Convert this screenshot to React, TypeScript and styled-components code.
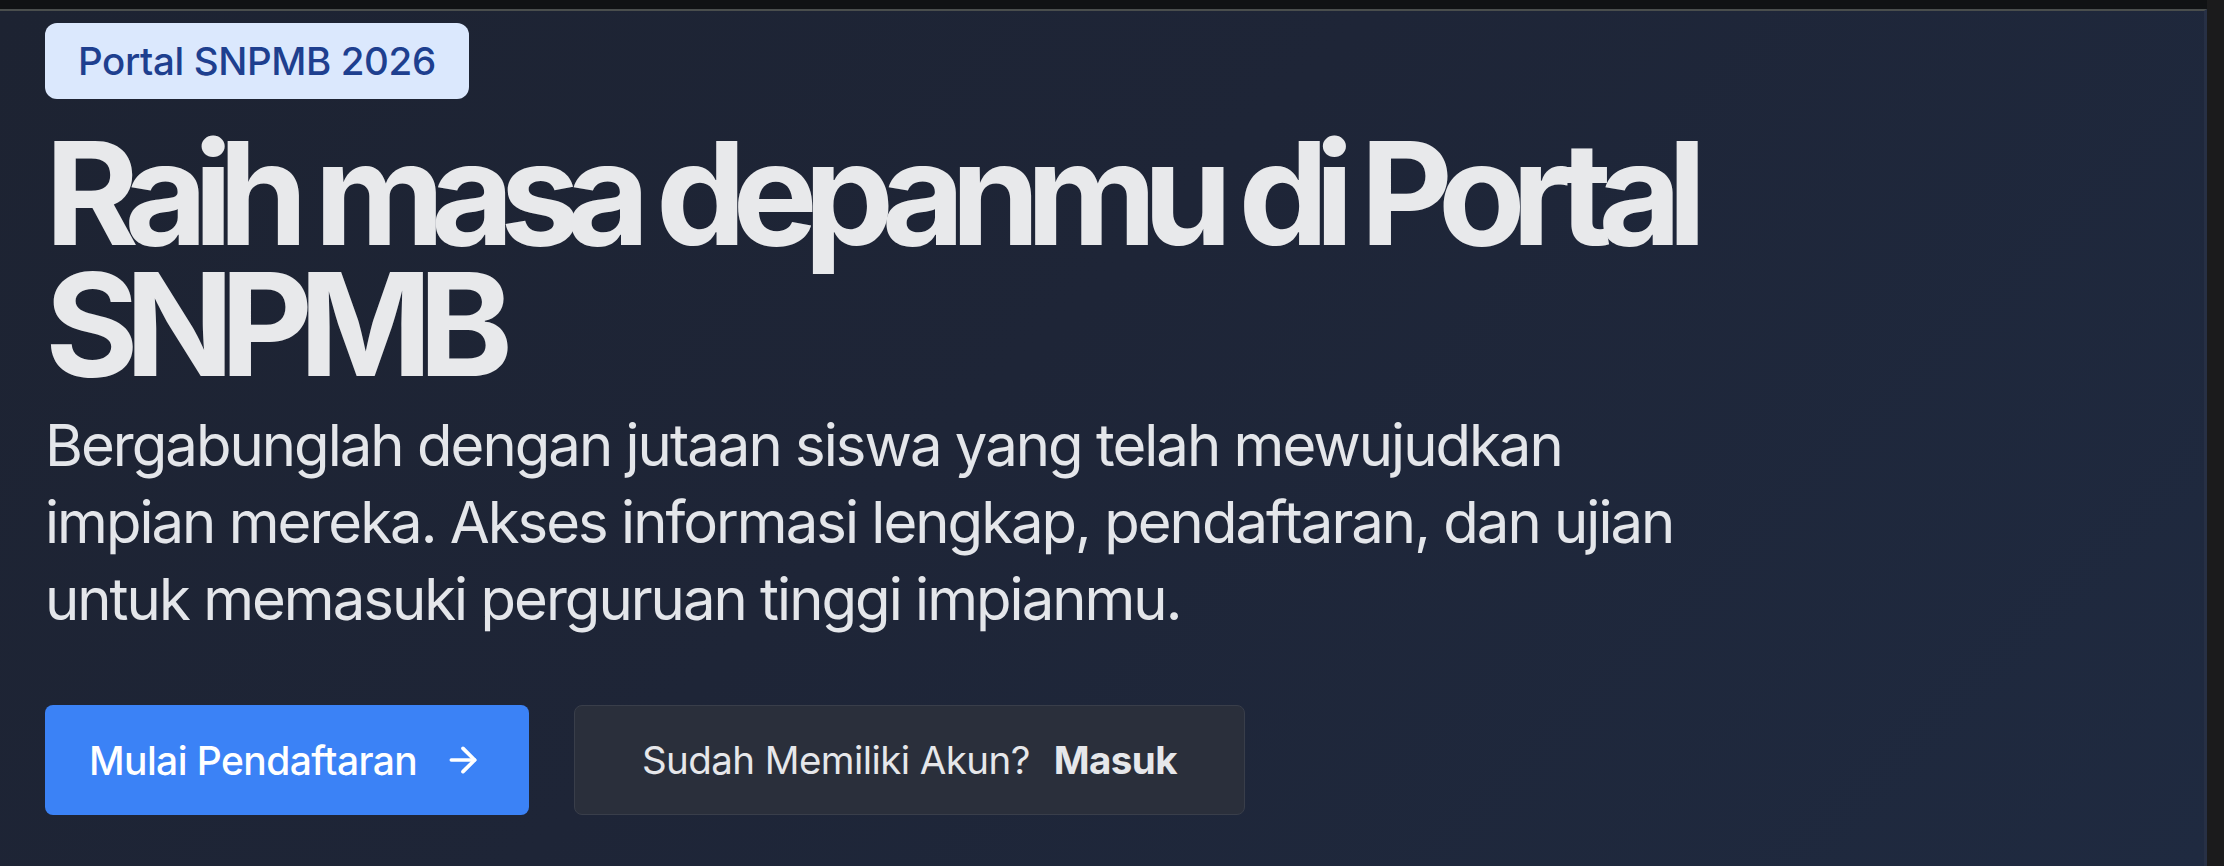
import React from "react";
import styled, { createGlobalStyle } from "styled-components";
import { ArrowRight } from "lucide-react";

const GlobalStyle = createGlobalStyle`
  html, body {
    margin: 0;
    padding: 0;
    background: #111315;
  }
  * {
    box-sizing: border-box;
  }
`;

const Page = styled.div`
  display: flex;
  width: 100%;
  height: 866px;
  overflow: hidden;
  font-family: Inter, "Noto Sans", sans-serif;
`;

const Main = styled.div`
  flex: 1;
  display: flex;
  flex-direction: column;
`;

const TopStrip = styled.div`
  height: 9px;
  background: #101214;
`;

const Hero = styled.section`
  flex: 1;
  border-top: 2px solid #4a4e4d;
  border-right: 3px solid #273045;
  background: linear-gradient(135deg, #1d2332 0%, #1e2537 45%, #1f2a40 100%);
  padding: 12px 0 0 45px;
  display: flex;
  flex-direction: column;
  align-items: flex-start;
`;

const ScrollTrack = styled.div`
  width: 17px;
  background: #1b1b1c;
`;

const Badge = styled.div`
  display: inline-flex;
  align-items: center;
  height: 76px;
  padding: 0 33px;
  border-radius: 12px;
  background: #dbe8fd;
  color: #1e3f8f;
  font-size: 38.5px;
  font-weight: 500;
  letter-spacing: -0.01em;
`;

const Heading = styled.h1`
  margin: 28px 0 0 0;
  font-size: 143px;
  font-weight: 700;
  line-height: 131px;
  letter-spacing: -0.096em;
  color: #e8e9eb;
`;

const Lead = styled.p`
  margin: 18px 0 0 0;
  font-size: 58px;
  font-weight: 400;
  line-height: 77px;
  letter-spacing: -0.034em;
  color: #e4e6ea;
`;

const Actions = styled.div`
  display: flex;
  gap: 45px;
  margin-top: 67px;
`;

const PrimaryButton = styled.button`
  display: flex;
  align-items: center;
  gap: 26px;
  width: 484px;
  height: 110px;
  padding: 0 0 0 44px;
  border: none;
  border-radius: 8px;
  background: #3b82f6;
  color: #ffffff;
  font-family: inherit;
  font-size: 39px;
  font-weight: 500;
  letter-spacing: -0.015em;
`;

const GhostButton = styled.button`
  display: flex;
  align-items: center;
  justify-content: center;
  gap: 24px;
  width: 671px;
  height: 110px;
  border: 1px solid #393e4a;
  border-radius: 8px;
  background: #2a2f3b;
  color: #e6e7ea;
  font-family: inherit;
  font-size: 38.5px;
  font-weight: 400;
  letter-spacing: -0.015em;
`;

const Strong = styled.span`
  font-weight: 700;
`;

export default function App() {
  return (
    <>
      <GlobalStyle />
      <Page>
        <Main>
          <TopStrip />
          <Hero>
            <Badge>Portal SNPMB 2026</Badge>
            <Heading>
              Raih masa depanmu di Portal
              <br />
              SNPMB
            </Heading>
            <Lead>
              Bergabunglah dengan jutaan siswa yang telah mewujudkan
              <br />
              impian mereka. Akses informasi lengkap, pendaftaran, dan ujian
              <br />
              untuk memasuki perguruan tinggi impianmu.
            </Lead>
            <Actions>
              <PrimaryButton>
                Mulai Pendaftaran
                <ArrowRight size={40} strokeWidth={2.2} />
              </PrimaryButton>
              <GhostButton>
                Sudah Memiliki Akun?
                <Strong>Masuk</Strong>
              </GhostButton>
            </Actions>
          </Hero>
        </Main>
        <ScrollTrack />
      </Page>
    </>
  );
}
